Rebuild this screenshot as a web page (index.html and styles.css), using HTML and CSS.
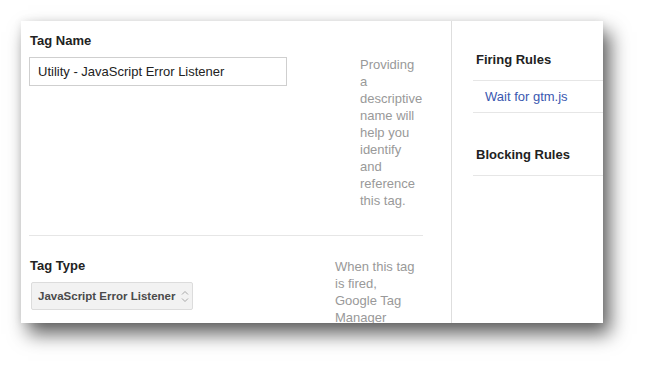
FILE: index.html
```html
<!DOCTYPE html>
<html>
<head>
<meta charset="utf-8">
<link rel="stylesheet" href="styles.css">
</head>
<body>
<div class="card">
  <div class="main">
    <div class="section section-name">
      <div class="field field-name">
        <div class="label">Tag Name</div>
        <div class="input">Utility - JavaScript Error Listener</div>
      </div>
      <div class="help help-name">Providing a descriptive name will help you identify and reference this tag.</div>
    </div>
    <div class="section section-type">
      <div class="field field-type">
        <div class="label">Tag Type</div>
        <div class="select">
          <span class="select-text">JavaScript Error Listener</span>
          <svg class="chev" width="8" height="13" viewBox="0 0 8 13"><path d="M1 4.5 L4 1.5 L7 4.5 M1 8.5 L4 11.5 L7 8.5" fill="none" stroke="#a8a8a8" stroke-width="1"/></svg>
        </div>
      </div>
      <div class="help help-type">When this tag is fired, Google Tag Manager</div>
    </div>
  </div>
  <div class="side">
    <div class="side-head side-head-first">Firing Rules</div>
    <div class="side-row"><span class="link">Wait for gtm.js</span></div>
    <div class="side-head side-head-second">Blocking Rules</div>
  </div>
</div>
</body>
</html>
```
FILE: styles.css
```css
html, body {
  margin: 0;
  padding: 0;
  background: #ffffff;
}
body {
  font-family: "Liberation Sans", Arial, sans-serif;
  width: 646px;
  height: 366px;
  overflow: hidden;
}
.card {
  margin: 21px 0 0 21px;
  width: 582px;
  height: 302px;
  background: #fff;
  display: flex;
  overflow: hidden;
  box-shadow: 0 0 8px rgba(0,0,0,0.08), 7px 11px 18px rgba(0,0,0,0.62);
}
.main {
  width: 430px;
  border-right: 1px solid #dedede;
  flex: none;
}
.section {
  display: flex;
  margin-left: 8px;
  width: 394px;
}
.section-name {
  padding-top: 12px;
  height: 202px;
  border-bottom: 1px solid #e6e6e6;
}
.section-type {
  padding-top: 22px;
}
.label {
  font-size: 13px;
  font-weight: bold;
  line-height: 16px;
  color: #222;
  padding-left: 1px;
}
.field-name { width: 331px; flex: none; }
.field-type { width: 306px; flex: none; }
.input {
  margin-top: 8px;
  width: 248px;
  height: 27px;
  border: 1px solid #cfcfcf;
  padding-left: 8px;
  font-size: 13px;
  line-height: 27px;
  color: #222;
}
.select {
  margin-top: 8px;
  margin-left: 2px;
  width: 154px;
  height: 26px;
  border: 1px solid #dcdcdc;
  border-radius: 2px;
  background: #f2f2f2;
  padding-left: 6px;
  display: flex;
  align-items: center;
  gap: 6px;
}
.select-text {
  font-size: 11.5px;
  font-weight: bold;
  color: #4a4a4a;
  white-space: nowrap;
}
.chev { flex: none; }
.help {
  font-size: 13px;
  line-height: 17px;
  color: #999;
}
.help-name {
  width: 63px;
  margin-top: 23px;
}
.help-type {
  width: 84px;
}
.side {
  flex: 1;
  padding-left: 21px;
}
.side-head {
  font-size: 13px;
  font-weight: bold;
  line-height: 16px;
  color: #222;
  padding-left: 3px;
  border-bottom: 1px solid #e6e6e6;
}
.side-head-first {
  padding-top: 31px;
  padding-bottom: 12px;
}
.side-head-second {
  padding-top: 34px;
  padding-bottom: 12px;
}
.side-row {
  height: 31px;
  display: flex;
  align-items: center;
  padding-left: 12px;
  border-bottom: 1px solid #e6e6e6;
}
.link {
  font-size: 13px;
  color: #3a58b0;
}
```
